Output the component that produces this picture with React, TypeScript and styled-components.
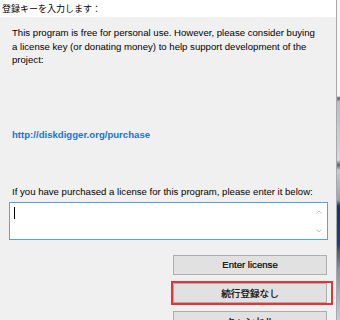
import styled, { createGlobalStyle } from 'styled-components';

const Global = createGlobalStyle`
  html, body { margin: 0; padding: 0; background: #f0f0f0; }
  body { font-family: 'Liberation Sans', Arial, sans-serif; }
`;

/* ── Frame ── */
const Screen = styled.div`
  width: 340px;
  height: 320px;
  overflow: hidden;
  display: flex;
`;

const Dialog = styled.div`
  width: 336px;
  display: flex;
  flex-direction: column;
  border-right: 1px solid #a9a9a9;
`;

/* desktop peeking in past the window edge */
const Desktop = styled.div`
  flex: 1;
  background: linear-gradient(
    to bottom,
    #f5f5f5 0, #f5f5f5 96px, #6c5a78 98px, #bdbdc8 102px, #d8d8dc 160px,
    #55607a 165px, #c9ccd4 170px, #9aa0b0 200px, #1b2f7a 206px, #203a8a 245px,
    #46557d 250px, #8a92a8 270px, #c8ccd6 320px
  );
`;

const TitleBar = styled.div`
  height: 17px;
  background: #ffffff;
  padding-left: 2px;
  font-family: 'Noto Sans CJK JP', sans-serif;
  font-size: 9px;
  line-height: 18px;
  color: #000;
`;

const Body = styled.div`
  flex: 1;
  background: #f0f0f0;
  padding: 9px 8px 0 9px;
  display: flex;
  flex-direction: column;
`;

const Text = styled.div`
  padding-left: 3px;
  font-size: 9.6px;
  line-height: 13.5px;
  color: #000;
  white-space: nowrap;
`;

const Link = styled.a`
  margin: 61px 0 0 3px;
  font-size: 9.6px;
  line-height: 13.5px;
  font-weight: 700;
  color: #2173cf;
  text-decoration: none;
`;

const Label = styled(Text)`
  margin-top: 44px;
`;

/* ── Key input ── */
const KeyBox = styled.div`
  margin-top: 3px;
  height: 36px;
  width: 317px;
  border: 1px solid #5b9fe3;
  background: #fff;
  display: flex;
`;

const Field = styled.div`
  flex: 1;
  padding: 4px 0 0 4px;
`;

const Caret = styled.span`
  display: block;
  width: 1px;
  height: 12px;
  background: #000;
`;

const ScrollCol = styled.div`
  width: 17px;
  display: flex;
  flex-direction: column;
  justify-content: space-between;
  align-items: center;
  padding: 7px 0 6px;
`;

const Chevron = ({ down }: { down?: boolean }) => (
  <svg width="6" height="4" viewBox="0 0 6 4">
    <path
      d={down ? 'M0.5 0.5 L3 3 L5.5 0.5' : 'M0.5 3.5 L3 1 L5.5 3.5'}
      fill="none"
      stroke="#c2c2c2"
      strokeWidth="1"
    />
  </svg>
);

/* ── Buttons ── */
const Buttons = styled.div`
  margin-top: 15px;
  padding-left: 164px;
  display: flex;
  flex-direction: column;
  gap: 8px;
`;

const Button = styled.button<{ $focus?: boolean }>`
  position: relative;
  width: 154px;
  height: 20px;
  flex-shrink: 0;
  margin: 0;
  padding: 0;
  background: #e1e1e1;
  border: 1px solid #adadad;
  font-family: 'Liberation Sans', 'Noto Sans CJK JP', sans-serif;
  font-size: 9.6px;
  font-weight: 400;
  color: #000;
  -webkit-text-stroke: 0.2px #000;

  ${p => p.$focus && `
    &::after {
      content: '';
      position: absolute;
      left: -3px; top: -3px; right: -7px; bottom: -3px;
      border: 2px solid #e0363a;
    }
  `}
`;

export default function App() {
  return (
    <Screen>
      <Global />
      <Dialog>
        <TitleBar>登録キーを入力します：</TitleBar>
        <Body>
          <Text>
            This program is free for personal use. However, please consider buying<br />
            a license key (or donating money) to help support development of the<br />
            project:
          </Text>
          <Link href="#">http://diskdigger.org/purchase</Link>
          <Label>If you have purchased a license for this program, please enter it below:</Label>
          <KeyBox>
            <Field><Caret /></Field>
            <ScrollCol>
              <Chevron />
              <Chevron down />
            </ScrollCol>
          </KeyBox>
          <Buttons>
            <Button>Enter license</Button>
            <Button $focus>続行登録なし</Button>
            <Button>キャンセル</Button>
          </Buttons>
        </Body>
      </Dialog>
      <Desktop />
    </Screen>
  );
}
